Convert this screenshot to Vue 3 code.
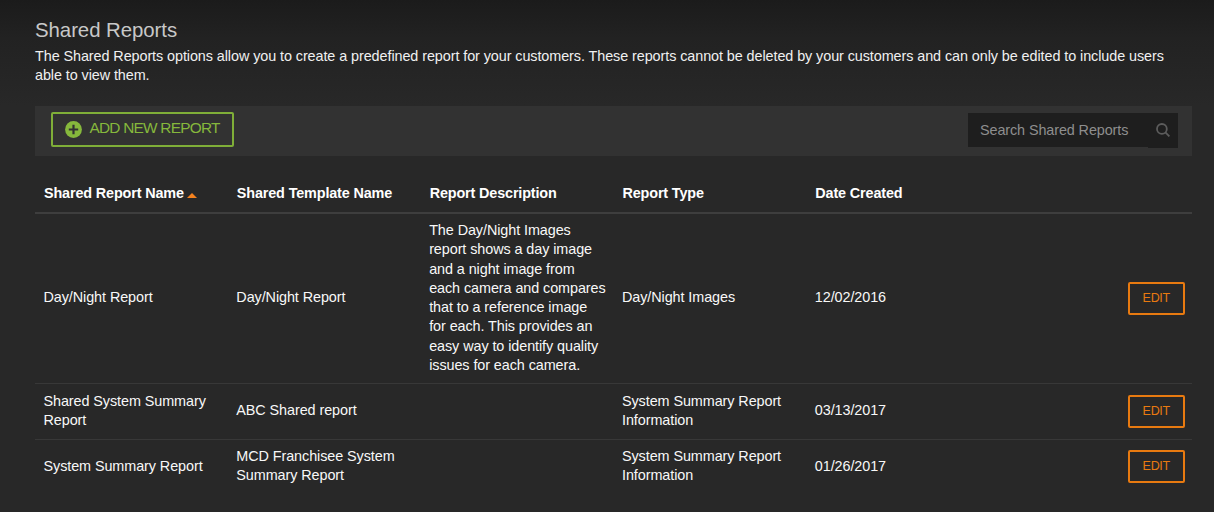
<template>
  <div class="shared-reports">
    <h1 class="title">Shared Reports</h1>
    <p class="intro">
      The Shared Reports options allow you to create a predefined report for your customers. These reports cannot be deleted by your customers and can only be edited to include users able to view them.
    </p>

    <div class="toolbar">
      <button class="btn-add" type="button">
        <svg class="icon-plus" viewBox="0 0 17 17">
          <circle cx="8.5" cy="8.5" r="8.4" fill="#86b83c" />
          <path d="M8.5 3.8v9.4M3.8 8.5h9.4" stroke="#323232" stroke-width="2.2" />
        </svg>
        <span>ADD NEW REPORT</span>
      </button>
      <div class="search">
        <input v-model="search" class="search__input" type="text" placeholder="Search Shared Reports" />
        <button class="search__btn" type="button" aria-label="Search">
          <svg class="icon-search" viewBox="0 0 14 14">
            <circle cx="5.9" cy="5.9" r="4.9" />
            <path d="M9.4 9.4l4 4" />
          </svg>
        </button>
      </div>
    </div>

    <table class="grid">
      <thead>
        <tr>
          <th v-for="col in columns" :key="col.key">
            {{ col.label }}<svg v-if="col.key === sortKey" class="icon-sort" viewBox="0 0 10 5"><path d="M5 0l5 5H0z" /></svg>
          </th>
          <th></th>
        </tr>
      </thead>
      <tbody>
        <tr v-for="row in filtered" :key="row.name">
          <td v-for="col in columns" :key="col.key">{{ row[col.key] }}</td>
          <td class="actions"><button class="btn-edit" type="button">EDIT</button></td>
        </tr>
      </tbody>
    </table>
  </div>
</template>

<script setup>
import { computed, ref } from 'vue'

const search = ref('')
const sortKey = ref('name')

const columns = [
  { key: 'name', label: 'Shared Report Name' },
  { key: 'template', label: 'Shared Template Name' },
  { key: 'description', label: 'Report Description' },
  { key: 'type', label: 'Report Type' },
  { key: 'created', label: 'Date Created' }
]

const reports = ref([
  {
    name: 'Day/Night Report',
    template: 'Day/Night Report',
    description: 'The Day/Night Images report shows a day image and a night image from each camera and compares that to a reference image for each. This provides an easy way to identify quality issues for each camera.',
    type: 'Day/Night Images',
    created: '12/02/2016'
  },
  {
    name: 'Shared System Summary Report',
    template: 'ABC Shared report',
    description: '',
    type: 'System Summary Report Information',
    created: '03/13/2017'
  },
  {
    name: 'System Summary Report',
    template: 'MCD Franchisee System Summary Report',
    description: '',
    type: 'System Summary Report Information',
    created: '01/26/2017'
  }
])

const filtered = computed(() => {
  const q = search.value.toLowerCase()
  return reports.value.filter(r => r.name.toLowerCase().includes(q))
})
</script>

<style>
body {
  background: #282828;
}
</style>

<style scoped>
.shared-reports {
  box-sizing: border-box;
  min-height: 512px;
  padding: 19px 22px 0 35px;
  background: linear-gradient(#1b1b1b 0, #222 38px, #282828 105px);
  font-family: Arial, "Liberation Sans", sans-serif;
  font-size: 14.4px;
  line-height: 19.25px;
  letter-spacing: -0.08px;
  color: #f8f8f8;
}

.title {
  margin: 0;
  font-size: 20.4px;
  font-weight: 400;
  line-height: 22px;
  letter-spacing: -0.05px;
  color: #c8c8c8;
}

.intro {
  margin: 6px 0 0;
  color: #f0f0f0;
}

.toolbar {
  display: flex;
  align-items: flex-start;
  justify-content: space-between;
  box-sizing: border-box;
  height: 50px;
  margin-top: 20.5px;
  padding: 6px 14px 0 16px;
  background: #323232;
}

button {
  margin: 0;
  font-family: inherit;
  cursor: pointer;
}

.btn-add {
  display: flex;
  align-items: center;
  box-sizing: border-box;
  width: 182.5px;
  height: 35px;
  padding: 0 0 0 11.5px;
  border: 2px solid #7fae38;
  border-radius: 2px;
  background: transparent;
  color: #86b83c;
  font-size: 15.4px;
  letter-spacing: -0.76px;
  white-space: nowrap;
}

.btn-add span {
  margin: -3px 0 0 8px;
}

.icon-plus {
  width: 17px;
  height: 17px;
  flex: none;
}

.search {
  display: flex;
  align-items: flex-start;
  margin-top: 1px;
}

.search__input {
  box-sizing: border-box;
  width: 180px;
  height: 34px;
  margin: 0;
  padding: 0 12px;
  border: 0;
  background: #1e1e1e;
  color: #ccc;
  font-family: inherit;
  font-size: 14.4px;
  letter-spacing: -0.1px;
}

.search__input::placeholder {
  color: #8e8e8e;
}

.search__btn {
  width: 30px;
  height: 35px;
  padding: 0;
  border: 0;
  background: #1e1e1e;
}

.icon-search {
  display: block;
  width: 14px;
  height: 14px;
  margin: -1px 0 0 7.5px;
  fill: none;
  stroke: #5c5c5c;
  stroke-width: 1.8;
}

.grid {
  width: 100%;
  margin-top: 17px;
  border-collapse: separate;
  border-spacing: 0;
  table-layout: fixed;
}

.grid th {
  box-sizing: border-box;
  height: 41px;
  padding: 2px 0 0 9px;
  border-bottom: 2px solid #3e3e3e;
  font-weight: 700;
  letter-spacing: -0.14px;
  text-align: left;
  white-space: nowrap;
  color: #fff;
}

.icon-sort {
  width: 10px;
  height: 5px;
  margin-left: 3px;
  fill: #f5821f;
}

.grid td {
  box-sizing: border-box;
  height: 56px;
  padding: 7px 7px 8px 8.5px;
  border-bottom: 1px solid #383838;
  vertical-align: middle;
}

.grid tr:last-child td {
  height: 53px;
  border-bottom: 0;
}

.grid .actions {
  padding-right: 7.5px;
  text-align: right;
}

.btn-edit {
  display: inline-block;
  box-sizing: border-box;
  width: 56.5px;
  height: 33px;
  padding: 0;
  border: 2px solid #e87a10;
  border-radius: 2px;
  background: transparent;
  color: #e87a10;
  font-size: 12.5px;
  letter-spacing: -0.3px;
  vertical-align: middle;
}
</style>
